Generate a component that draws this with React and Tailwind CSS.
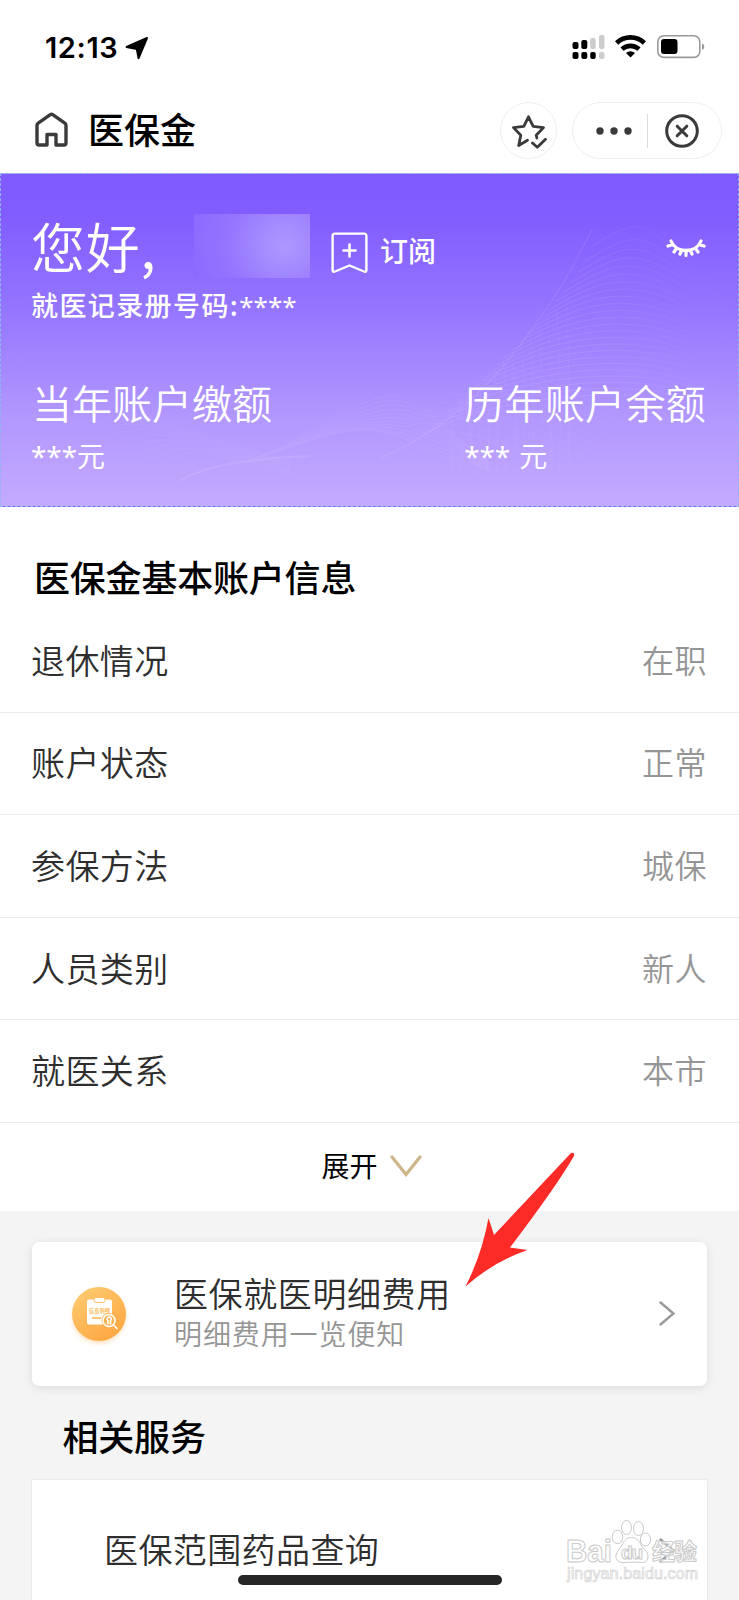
import React from 'react';

const accountRows = [
  { label: '退休情况', value: '在职' },
  { label: '账户状态', value: '正常' },
  { label: '参保方法', value: '城保' },
  { label: '人员类别', value: '新人' },
  { label: '就医关系', value: '本市' },
];

const StatusBar = () => (
  <div className="flex h-[95px] items-start justify-between pl-[45px] pr-[34px]">
    <div className="mt-[30px] flex items-center">
      <span className="font-['Inter'] text-[29px] leading-[36px] font-semibold tracking-[0.6px] text-black">12:13</span>
      <svg className="ml-[7px] h-[24px] w-[24px]" viewBox="0 0 24 24">
        <path d="M22 2 13.600 22.200 11.800 13 1.600 11z" fill="#000" stroke="#000" strokeWidth="2" strokeLinejoin="round" />
      </svg>
    </div>
    <div className="mt-[35px] flex items-start">
      <svg className="h-[25px] w-[33px]" viewBox="0 0 33 25">
        <rect x="0.500" y="7" width="6" height="7" rx="2" fill="#000" />
        <rect x="9.300" y="5" width="6" height="9" rx="2" fill="#000" />
        <rect x="18.200" y="3" width="5.5" height="11" rx="2" fill="#ccc" />
        <rect x="27" y="0" width="5.5" height="14" rx="2" fill="#ccc" />
        <rect x="0.500" y="17" width="6" height="7" rx="2" fill="#000" />
        <rect x="9.300" y="17" width="6" height="7" rx="2" fill="#000" />
        <rect x="18.200" y="17" width="5.5" height="7" rx="2" fill="#000" />
        <rect x="27" y="17" width="5.5" height="7" rx="2" fill="#ccc" />
      </svg>
      <svg className="ml-[10px] h-[23px] w-[31px]" viewBox="0 0 31 23" fill="none" stroke="#000" strokeWidth="4.6">
        <path d="M1.6 8a20 20 0 0 1 27.8 0" />
        <path d="M7 14.200a12.400 12.400 0 0 1 17 0" />
        <path d="M15.500 22.400 11 18a7 7 0 0 1 9 0z" fill="#000" stroke="none" />
      </svg>
      <svg className="ml-[11px] h-[24px] w-[48px]" viewBox="0 0 48 24">
        <rect x="0.8" y="0.8" width="42" height="21.6" rx="6" fill="none" stroke="#999" strokeWidth="1.6" />
        <rect x="4" y="4" width="16.5" height="15" rx="3" fill="#000" />
        <path d="M45 8.500c3 1 3 5.500 0 6.500z" fill="#999" />
      </svg>
    </div>
  </div>
);

const NavBar = () => (
  <div className="flex h-[78px] items-start pl-[35px] pr-[17px]">
    <svg className="mt-[17px] h-[35px] w-[33px]" viewBox="0 0 33 35" fill="none" stroke="#3a3a3a" strokeWidth="3.4" strokeLinejoin="round">
      <path d="M2 13.500 Q2 12 3.200 11.200 L15.300 2.700 Q16.500 1.900 17.700 2.700 L29.800 11.200 Q31 12 31 13.500 V31 Q31 33 29 33 H21 V22.500 H12 V33 H4 Q2 33 2 31z" />
    </svg>
    <h1 className="ml-[20px] mt-[7px] text-[36px] leading-[52px] font-medium text-black">医保金</h1>
    <div className="ml-auto mt-[7px] flex h-[57px] w-[57px] items-center justify-center rounded-full border border-[#efefef]">
      <svg className="ml-[2px] mt-[2px] h-[34px] w-[35px]" viewBox="0 0 35 34" fill="none" stroke="#3a3a3a" strokeWidth="2.800" strokeLinecap="round" strokeLinejoin="round">
        <path d="M15.500 25.200 6.700 30.500 8.800 20.200 1.500 12.600 11.800 11.400 16.500 1.800 21.200 11.400 31.500 12.600 24.200 20.200 24.900 23" />
        <path d="m20.500 28 4.800 4.200 8.200-8" />
      </svg>
    </div>
    <div className="ml-[15px] mt-[7px] flex h-[57px] w-[150px] items-center rounded-full border border-[#efefef]">
      <svg className="ml-[22.500px] h-[8px] w-[36px]" viewBox="0 0 36 8" fill="#3a3a3a">
        <circle cx="4" cy="4" r="3.700" />
        <circle cx="18" cy="4" r="3.700" />
        <circle cx="32" cy="4" r="3.700" />
      </svg>
      <div className="ml-[15.500px] h-[34px] w-px bg-[#dcdcdc]" />
      <svg className="ml-[16.500px] h-[34px] w-[34px]" viewBox="0 0 34 34" fill="none" stroke="#3a3a3a" strokeWidth="3" strokeLinecap="round">
        <circle cx="17" cy="17" r="15.300" />
        <path d="m12.200 12.200 9.600 9.600M21.800 12.200l-9.600 9.600" />
      </svg>
    </div>
  </div>
);

// faint line mesh behind the account summary
const Mesh = () => {
  const arcs = Array.from({ length: 24 }, (_, i) => {
    const t = i / 23;
    const x = 594 - 170 * t;
    const y = 60 + 190 * Math.pow(t, 0.8);
    return `M${x} ${y + 12} C${x + 60} ${y - 24} ${640 + 20 * t} ${50 + 150 * t} 738 ${130 + 120 * t}`;
  });
  const strands = Array.from({ length: 14 }, (_, i) => {
    const x = 450 + i * 9;
    return `M${x} ${232 - i * 8} Q${x + 6} ${260 - i * 3} ${x + 2} 300`;
  });
  const crossing = Array.from({ length: 10 }, (_, i) => {
    const d = i * 6;
    return `M${390 + d * 2} ${262 - d * 1.3} Q${460 + d} ${245 - d} ${570 + d} ${296 - d}`;
  });
  const hills = Array.from({ length: 12 }, (_, i) => {
    const d = i * 5;
    return `M${250 + d} ${288 - d / 3} C${320 + d} ${262 - d / 3} ${372 + d / 2} ${210 + d} ${408 + d / 2} ${226 + d} S${450} ${265 + d / 4} 490 ${290 + d / 6}`;
  });
  const left = Array.from({ length: 10 }, (_, i) => {
    const d = i * 7;
    return `M${90 + d} ${232 + d} C${140 + d} ${236 + d / 2} 190 ${262 + d / 3} 290 ${288 + d / 5}`;
  });
  return (
    <svg className="absolute inset-0 h-full w-full" viewBox="0 0 739 334" fill="none" stroke="#fff" strokeWidth="1">
      <defs>
        <linearGradient id="arcFade" gradientUnits="userSpaceOnUse" x1="400" y1="0" x2="738" y2="0">
          <stop offset="0" stopColor="#fff" stopOpacity="0.500" />
          <stop offset="0.500" stopColor="#fff" />
          <stop offset="1" stopColor="#fff" stopOpacity="0" />
        </linearGradient>
      </defs>
      <g opacity="0.100" stroke="url(#arcFade)">{arcs.map((d) => <path key={d} d={d} />)}</g>
      <g opacity="0.040">{strands.map((d) => <path key={d} d={d} />)}</g>
      <g opacity="0.040">{crossing.map((d) => <path key={d} d={d} />)}</g>
      <g opacity="0.060">{hills.map((d) => <path key={d} d={d} />)}</g>
      <g opacity="0.040">{left.map((d) => <path key={d} d={d} />)}</g>
      <path d="M0 208Q15 190 32 170" opacity="0.060" />
      <path d="M380 286C450 255 490 215 530 160S575 90 594 55" opacity="0.120" />
      <path d="M180 308Q200 296 240 290T310 284" opacity="0.100" strokeWidth="2" />
    </svg>
  );
};

const Summary = () => (
  <div className="relative h-[334px] border border-dashed border-[#8fb6ee] bg-[linear-gradient(180deg,#7f5aff_0%,#815cff_12%,#9273ff_38%,#b196fe_72%,#c4aafe_100%)] text-white">
    <Mesh />
    <div className="relative flex flex-col pl-[30px] pr-[32px]">
      <div className="flex h-[112px] items-start">
        <span className="mt-[33px] w-[163px] whitespace-nowrap text-[54px] leading-[78px] font-[350] tracking-[0.800px]">您好<span className="font-normal">,</span></span>
        <div className="mt-[40px] h-[64px] w-[116px] bg-[radial-gradient(circle_at_78%_50%,#ad98ff_0%,#a38bff_25%,#9375ff_60%,#8b6aff_100%)]" />
        <svg className="ml-[21px] mt-[58px] h-[42px] w-[37px]" viewBox="0 0 37 42" fill="none" stroke="#fff" strokeWidth="2.600" strokeLinejoin="round" strokeLinecap="round">
          <path d="M4 1.600H33Q35.400 1.600 35.400 4V38Q35.400 40.500 33 39.500L18.500 33.500 4 39.500Q1.600 40.500 1.600 38V4Q1.600 1.600 4 1.600z" strokeWidth="2.400" />
          <path d="M18.500 12.500v12M12.500 18.500h12" />
        </svg>
        <span className="ml-[12px] mt-[56px] text-[28px] leading-[40px] font-medium">订阅</span>
        <svg className="ml-auto mt-[64px] h-[20px] w-[40px]" viewBox="0 0 40 20" fill="none" stroke="#fff" strokeWidth="3.200" strokeLinecap="round">
          <path d="M5 3C10 15.500 30 15.500 35 3M7 6.500 2 8M33 6.500 38 8M10.500 10.500 8 14M29.500 10.500 32 14M15.500 12.500 14 16M24.500 12.500 26 16M20 13v4.500" />
        </svg>
      </div>
      <div className="-mt-px text-[27px] leading-[40px] font-medium tracking-[1.400px]">就医记录册号码:<span className="font-['Noto_Sans'] text-[26px] font-normal tracking-[0]">****</span></div>
      <div className="mt-[47px] flex">
        <div className="w-[435px]">
          <div className="pl-px text-[40px] leading-[58px] font-[350]">当年账户缴额</div>
          <div className="mt-[4px] text-[28px] leading-[40px]"><span className="font-['Noto_Sans'] tracking-[-0.100px]">***</span>元</div>
        </div>
        <div className="whitespace-nowrap">
          <div className="text-[40px] leading-[58px] font-[350] tracking-[0.300px]">历年账户余额</div>
          <div className="mt-[4px] text-[28px] leading-[40px]"><span className="mr-[9px] font-['Noto_Sans'] tracking-[-0.100px]">***</span>元</div>
        </div>
      </div>
    </div>
  </div>
);

const AccountInfo = () => (
  <div className="h-[704px] bg-white pt-[43px]">
    <h2 className="pl-[34px] text-[36px] leading-[52px] font-medium tracking-[-0.200px] text-black">医保金基本账户信息</h2>
    <div className="mt-[8px]">
      {accountRows.map((row) => (
        <div key={row.label} className="flex h-[102.600px] items-center justify-between border-b border-[#ececec] pb-[2px] pl-[31px] pr-[32px]">
          <span className="text-[34px] leading-[48px] font-[350] tracking-[0.400px] text-[#2e2e2e]">{row.label}</span>
          <span className="-mt-[2px] text-[32px] leading-[46px] font-[350] tracking-[0.500px] text-[#959595]">{row.value}</span>
        </div>
      ))}
    </div>
    <div className="mt-[22px] flex items-center justify-center text-[28px] leading-[40px] text-black">
      <span className="ml-[4px]">展开</span>
      <svg className="ml-[12px] mt-[2px] h-[22px] w-[32px]" viewBox="0 0 32 22" fill="none" stroke="#cdb68a" strokeWidth="3.200" strokeLinecap="round">
        <path d="M2 2 16 19.500 30 2" />
      </svg>
    </div>
  </div>
);

const DetailIcon = () => (
  <svg className="h-[66px] w-[66px]" viewBox="0 0 66 66">
    <defs>
      <linearGradient id="orange" x1="0.100" y1="0" x2="0.800" y2="1">
        <stop offset="0" stopColor="#fecb72" />
        <stop offset="1" stopColor="#fda640" />
      </linearGradient>
      <filter id="glow" x="-20%" y="-20%" width="140%" height="150%">
        <feGaussianBlur stdDeviation="2.500" />
      </filter>
    </defs>
    <circle cx="33" cy="36" r="26" fill="#fdb45c" opacity="0.450" filter="url(#glow)" />
    <circle cx="33" cy="33" r="27" fill="url(#orange)" />
    <rect x="21" y="18.500" width="25" height="25" rx="2" fill="#fff" />
    <rect x="28" y="16.500" width="11" height="5" rx="2" fill="#fff" stroke="#fdbd60" strokeWidth="1" />
    <text x="33.500" y="31.500" textAnchor="middle" fontSize="5.200" fontWeight="700" fill="#fdbd60">信息明细</text>
    <path d="M26 37h9" stroke="#fdb858" strokeWidth="1.600" />
    <circle cx="43" cy="39.500" r="7.500" fill="#fdb454" />
    <circle cx="43" cy="39.500" r="6" fill="#fdb454" stroke="#fff" strokeWidth="1.500" />
    <path d="M42 43v-3.500a2 2 0 1 1 2.500 0V43M47.500 44l3.500 3.500" stroke="#fff" strokeWidth="1.600" strokeLinecap="round" fill="none" />
  </svg>
);

const Chevron = () => (
  <svg className="h-[25px] w-[16px]" viewBox="0 0 16 25" fill="none" stroke="#999" strokeWidth="2.400" strokeLinecap="round">
    <path d="M1.500 1.500 14.500 12.500 1.500 23.500" />
  </svg>
);

const Arrow = () => (
  <svg className="absolute top-[1150px] left-[464px] h-[138px] w-[112px]" viewBox="0 0 112 138">
    <path d="M1.500 136.500 Q18 104 24.500 68 L30 85 L107 3 Q111 1.500 110 6 Q92 37 46 97.500 L63.500 100 Q29 112 1.500 136.500z" fill="#fd2b27" />
  </svg>
);

const Watermark = () => (
  <div className="absolute top-[1518px] left-[566px] h-[66px] w-[136px]">
    <svg className="h-full w-full" viewBox="0 0 136 66" fill="#fff" stroke="#c9c9c9" strokeWidth="1" fontFamily="Liberation Sans, Noto Sans CJK SC, sans-serif">
      <ellipse cx="51.500" cy="19" rx="5.300" ry="6.800" />
      <ellipse cx="60.500" cy="9.500" rx="5" ry="7" />
      <ellipse cx="72.500" cy="10.500" rx="5" ry="7" />
      <ellipse cx="79.500" cy="21.500" rx="5.200" ry="6.500" />
      <path d="M56 27C60 17 71 17 75 27C78 32 82 33 82 38C82 43 79 45 75 44.500C70 44 64 44 59 44.500C53 45 49 42 50 37C51 33 54 31 56 27z" />
      <text x="0" y="44" fontSize="31" fontWeight="700" textLength="46" lengthAdjust="spacingAndGlyphs">Bai</text>
      <text x="55" y="40.500" fontSize="19" fontWeight="700" textLength="22">du</text>
      <text x="86" y="42" fontSize="23" fontWeight="700" textLength="45" fillOpacity="0.700">经验</text>
      <text x="1" y="60.500" fontSize="16" textLength="131" stroke="#d2d2d2" strokeWidth="0.700">jingyan.baidu.com</text>
    </svg>
  </div>
);

const App = () => (
  <div className="relative h-[1600px] w-[739px] overflow-hidden bg-[#f4f4f4] font-['Noto_Sans_CJK_SC',sans-serif]">
    <div className="bg-white">
      <StatusBar />
      <NavBar />
    </div>
    <Summary />
    <AccountInfo />
    <div className="mx-[32px] mt-[31px] flex h-[144px] items-center rounded-[7px] bg-white pl-[34px] pr-[32px] shadow-[0_2px_10px_rgba(0,0,0,0.1)]">
      <DetailIcon />
      <div className="-mt-[6px] ml-[42px]">
        <div className="text-[34px] leading-[44px] font-[350] tracking-[0.600px] text-[#2e2e2e]">医保就医明细费用</div>
        <div className="text-[28px] leading-[36px] font-[350] tracking-[0.900px] text-[#959595]">明细费用一览便知</div>
      </div>
      <div className="-mt-[2px] ml-auto"><Chevron /></div>
    </div>
    <h2 className="mt-[23px] ml-[62.500px] text-[36px] leading-[52px] font-medium tracking-[-0.200px] text-black">相关服务</h2>
    <div className="mx-[32px] mt-[19px] flex h-[140px] items-center justify-between bg-white pl-[72px] pr-[32px] shadow-[0_0_2px_rgba(0,0,0,0.12)]">
      <span className="-mt-[2px] text-[34px] leading-[48px] font-[350] tracking-[0.400px] text-[#2e2e2e]">医保范围药品查询</span>
      <Chevron />
    </div>
    <Watermark />
    <Arrow />
    <div className="absolute top-[1575px] left-[238px] h-[10px] w-[264px] rounded-full bg-[#262626]" />
  </div>
);

export default App;
